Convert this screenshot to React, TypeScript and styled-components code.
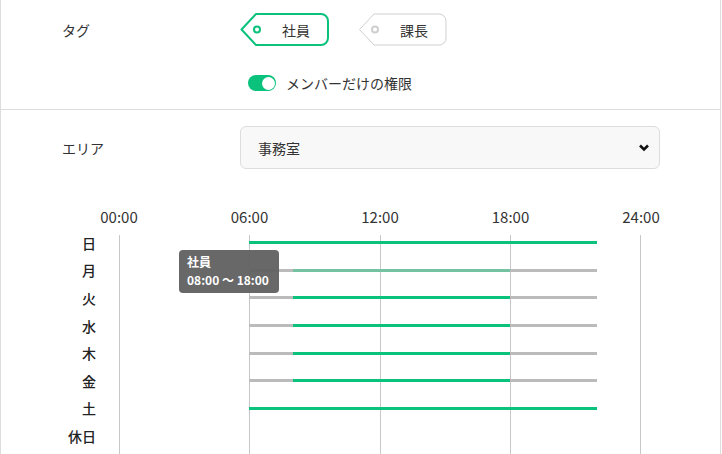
import React from 'react';
import styled, { createGlobalStyle } from 'styled-components';

const GREEN = '#0bc27d';

const GlobalStyle = createGlobalStyle`
  html, body {
    margin: 0;
    padding: 0;
    background: #fff;
  }
  body {
    font-family: 'Noto Sans CJK JP', 'Noto Sans', sans-serif;
    color: #333;
  }
`;

const Panel = styled.div`
  width: 719px;
  min-height: 100vh;
  border-left: 1px solid #ddd;
  border-right: 1px solid #ddd;
  overflow: hidden;
`;

const TopSection = styled.section`
  height: 96px;
  padding-top: 13px;
  border-bottom: 1px solid #ddd;
`;

const FieldRow = styled.div`
  display: grid;
  grid-template-columns: 178px 1fr;
  align-items: center;
  padding-left: 61px;
`;

const Label = styled.div`
  font-size: 14px;
  line-height: 20px;
  color: #333;
`;

const TagList = styled.div`
  display: flex;
  gap: 28px;
`;

const TagBox = styled.div`
  position: relative;
  width: 90px;
  height: 33px;
  display: flex;
  align-items: center;
  font-size: 14px;
  color: #333;
`;

const TagShape = styled.svg`
  position: absolute;
  inset: 0;
`;

const TagText = styled.span`
  position: relative;
  margin-left: 42px;
  line-height: 20px;
`;

const ToggleRow = styled.div`
  display: flex;
  align-items: center;
  gap: 10px;
  margin: 27px 0 0 247px;
  font-size: 14px;
  line-height: 20px;
`;

const Toggle = styled.div<{ $on: boolean }>`
  width: 28px;
  height: 16px;
  border-radius: 8px;
  background: ${(p) => (p.$on ? GREEN : '#ccc')};
  display: flex;
  align-items: center;
  justify-content: ${(p) => (p.$on ? 'flex-end' : 'flex-start')};
  padding: 0 1px;
  box-sizing: border-box;

  &::after {
    content: '';
    width: 13px;
    height: 13px;
    border-radius: 50%;
    background: #fff;
  }
`;

const Section = styled.section`
  padding-top: 16px;
`;

const Select = styled.div`
  width: 420px;
  height: 43px;
  box-sizing: border-box;
  border: 1px solid #ddd;
  border-radius: 6px;
  background: #f8f8f8;
  display: flex;
  align-items: center;
  justify-content: space-between;
  padding: 0 10px 0 17px;
  font-size: 14px;
  color: #333;
`;

const Chart = styled.div`
  margin-top: 38px;
  display: grid;
  grid-template-columns: 95px 522px;
  column-gap: 23px;
`;

const Axis = styled.div`
  grid-column: 2;
  display: flex;
  justify-content: space-between;
  margin: 0 -20px 2px;
`;

const Tick = styled.span`
  width: 40px;
  text-align: center;
  font-size: 15px;
  line-height: 20px;
  color: #333;
`;

const DayLabels = styled.div`
  display: flex;
  flex-direction: column;
  align-items: flex-end;
`;

const DayLabel = styled.div`
  height: 27.6px;
  display: flex;
  align-items: center;
  font-size: 14px;
  font-weight: 500;
  color: #222;
`;

const Plot = styled.div`
  position: relative;
  padding-bottom: 20px;
  background:
    linear-gradient(#c8c8c8, #c8c8c8) 0 6px / 1px 100% no-repeat,
    linear-gradient(#c8c8c8, #c8c8c8) 130px 6px / 1px 100% no-repeat,
    linear-gradient(#c8c8c8, #c8c8c8) 261px 6px / 1px 100% no-repeat,
    linear-gradient(#c8c8c8, #c8c8c8) 391px 6px / 1px 100% no-repeat,
    linear-gradient(#c8c8c8, #c8c8c8) 521px 6px / 1px 100% no-repeat;
`;

const Track = styled.div`
  height: 27.6px;
  display: flex;
  align-items: center;
`;

const Segment = styled.div<{ $kind: 'on' | 'off' | 'dim' }>`
  height: 3px;
  background: ${(p) =>
    p.$kind === 'on' ? GREEN : p.$kind === 'dim' ? '#74c2a2' : '#bbb'};
`;

const Tooltip = styled.div`
  position: absolute;
  left: 60px;
  top: 21px;
  width: 100px;
  height: 43px;
  box-sizing: border-box;
  padding: 3px 0 0 8px;
  border-radius: 4px;
  background: rgba(96, 96, 96, 0.95);
  color: #fff;
  font-size: 12px;
  font-weight: 700;
  line-height: 18px;
`;

type Seg = { from: number; to: number; kind: 'on' | 'off' | 'dim' };

const workday = (kind: 'on' | 'dim'): Seg[] => [
  { from: 6, to: 8, kind: 'off' },
  { from: 8, to: 18, kind },
  { from: 18, to: 22, kind: 'off' },
];

const days: { name: string; segs: Seg[] }[] = [
  { name: '日', segs: [{ from: 6, to: 22, kind: 'on' }] },
  { name: '月', segs: workday('dim') },
  { name: '火', segs: workday('on') },
  { name: '水', segs: workday('on') },
  { name: '木', segs: workday('on') },
  { name: '金', segs: workday('on') },
  { name: '土', segs: [{ from: 6, to: 22, kind: 'on' }] },
  { name: '休日', segs: [] },
];

const HOUR = 521 / 24;

const Tag = ({ label, active }: { label: string; active: boolean }) => {
  const color = active ? GREEN : '#cfcfcf';
  return (
    <TagBox>
      <TagShape width='90' height='33' viewBox='0 0 90 33'>
        <path
          d='M16 1 H81 A7 7 0 0 1 88 8 V25 A7 7 0 0 1 81 32 H16 L1.5 16.5 Z'
          fill='#fff'
          stroke={color}
          strokeWidth={active ? 2 : 1}
          strokeLinejoin='round'
        />
        <circle cx='17' cy='16.5' r='3' fill='none' stroke={color} strokeWidth='2' />
      </TagShape>
      <TagText>{label}</TagText>
    </TagBox>
  );
};

const Chevron = () => (
  <svg width='10' height='8' viewBox='0 0 10 8'>
    <path d='M1 1.5 L5 5.5 L9 1.5' fill='none' stroke='#111' strokeWidth='2.6' />
  </svg>
);

export default function App() {
  return (
    <>
      <GlobalStyle />
      <Panel>
        <TopSection>
          <FieldRow>
            <Label>タグ</Label>
            <TagList>
              <Tag label='社員' active />
              <Tag label='課長' active={false} />
            </TagList>
          </FieldRow>
          <ToggleRow>
            <Toggle $on />
            <span>メンバーだけの権限</span>
          </ToggleRow>
        </TopSection>

        <Section>
          <FieldRow>
            <Label>エリア</Label>
            <Select>
              <span>事務室</span>
              <Chevron />
            </Select>
          </FieldRow>

          <Chart>
            <Axis>
              {['00:00', '06:00', '12:00', '18:00', '24:00'].map((t) => (
                <Tick key={t}>{t}</Tick>
              ))}
            </Axis>
            <DayLabels>
              {days.map((d) => (
                <DayLabel key={d.name}>{d.name}</DayLabel>
              ))}
            </DayLabels>
            <Plot>
              {days.map((d) => (
                <Track key={d.name}>
                  {d.segs.length > 0 && (
                    <div style={{ width: d.segs[0].from * HOUR }} />
                  )}
                  {d.segs.map((s, i) => (
                    <Segment
                      key={i}
                      $kind={s.kind}
                      style={{ width: (s.to - s.from) * HOUR }}
                    />
                  ))}
                </Track>
              ))}
              <Tooltip>
                <div>社員</div>
                <div>08:00 ～ 18:00</div>
              </Tooltip>
            </Plot>
          </Chart>
        </Section>
      </Panel>
    </>
  );
}
